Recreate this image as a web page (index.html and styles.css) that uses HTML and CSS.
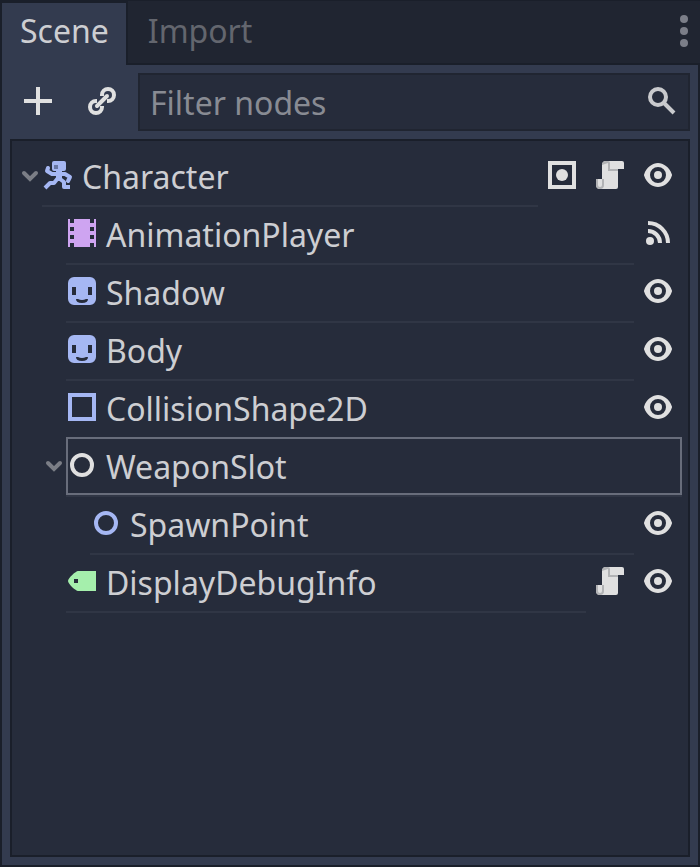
FILE: index.html
```html
<!DOCTYPE html>
<html lang="en">
<head>
<meta charset="utf-8">
<title>Scene</title>
<link rel="stylesheet" href="styles.css">
</head>
<body>
<svg class="defs" aria-hidden="true">
  <symbol id="eye" viewBox="0 0 16 16"><path fill="#e0e0e0" fill-rule="evenodd" d="M8 2C5.443 2 2.209 3.948 1.045 7.705a1 1 0 0 0-.01.559C2.163 12.211 5.500 14 8 14s5.836-1.789 6.965-5.736a1 1 0 0 0 0-.553C13.767 3.941 10.557 2 8 2zm0 2a4 4 0 0 1 0 8 4 4 0 0 1 0-8zm0 2a2 2 0 0 0 0 4 2 2 0 0 0 0-4z"/></symbol>
  <symbol id="script" viewBox="0 0 16 16"><path fill="#e0e0e0" d="M6 1h8a1 1 0 0 1 1 1v3h-3v9a1 1 0 0 1-1 1H3a2 2 0 0 1-2-2v-3h3V3a2 2 0 0 1 2-2z"/><path fill="#b2b3b5" d="M6 1a2 2 0 0 0-2 2l3-1v4h5V5H8V2a1 1 0 0 0-1-1zM4 10h1v3a2 2 0 0 1-2 2 2 2 0 0 1-2-2v-3h1v3a1 1 0 0 0 2 0z"/></symbol>
  <symbol id="sprite" viewBox="0 0 16 16"><path fill="#a5b7f3" fill-rule="evenodd" d="M4 1a3 3 0 0 0-3 3v8a3 3 0 0 0 3 3h8a3 3 0 0 0 3-3V4a3 3 0 0 0-3-3zM3 6h2v4H3zm8 0h2v4h-2zM5 12h1q2 1 4 0h1q0 2-3 2t-3-2z"/></symbol>
  <symbol id="arrow" viewBox="0 0 12 16"><path fill="none" stroke="#7b7e86" stroke-width="2" stroke-linecap="round" d="m3 7 3 3 3-3"/></symbol>
</svg>
<main class="dock">
  <header class="tabs" role="tablist">
    <button class="tab active" role="tab" aria-selected="true">Scene</button>
    <button class="tab" role="tab" aria-selected="false">Import</button>
    <button class="more" aria-label="Dock options"><svg viewBox="0 0 8 32" width="8" height="32"><g fill="#7b7e88"><circle cx="4" cy="4" r="4"/><circle cx="4" cy="16" r="4"/><circle cx="4" cy="28" r="4"/></g></svg></button>
  </header>
  <section class="panel">
    <div class="toolbar">
      <button class="tool" aria-label="Add node"><svg class="icon" viewBox="0 0 16 16"><path fill="#e0e0e0" d="M7 1v6H1v2h6v6h2V9h6V7H9V1z"/></svg></button>
      <button class="tool" aria-label="Instance scene"><svg class="icon" viewBox="0 0 16 16"><g fill="none" stroke="#e0e0e0" stroke-width="2"><path d="M8 5.500V5a3 3 0 1 1 3 3h-.5M8 10.500v.5a3 3 0 1 1-3-3h.5"/><path stroke-linecap="round" d="m5.500 10.500 5-5"/></g></svg></button>
      <label class="search"><input type="text" placeholder="Filter nodes" aria-label="Filter nodes"><svg class="icon" viewBox="0 0 16 16"><g fill="none" stroke="#c9cacd" stroke-width="2"><circle cx="6" cy="6" r="4"/><path d="m9 9 5 5"/></g></svg></label>
    </div>
    <ul class="tree" role="tree">
      <li class="row" role="treeitem">
        <button class="fold" aria-label="Collapse"><svg><use href="#arrow"/></svg></button>
        <div class="item"><svg class="icon" viewBox="0 0 16 16"><path fill="#a5b7f3" d="M6 1h5a1 1 0 0 1 1 1v3a1 1 0 0 1-1 1h-1v5H7V6H6a1 1 0 0 1-1-1V2a1 1 0 0 1 1-1z"/><path fill="#6776a3" d="M6 3h2v2H6z"/><path fill="none" stroke="#a5b7f3" stroke-width="2" stroke-linecap="round" stroke-linejoin="round" d="M3 4.500 2.500 6 5 7.500h6.500L14 9l-1 2"/><path fill="none" stroke="#a5b7f3" stroke-width="2" stroke-linejoin="round" d="M8 9.500 6 12H4l-2.500 2.500M9 10l2 1.500V14h3"/></svg><span>Character</span></div>
        <button class="act" aria-label="Groups"><svg class="icon" viewBox="0 0 16 16"><rect x="2" y="2" width="12" height="12" fill="none" stroke="#e0e0e0" stroke-width="2"/><circle cx="8" cy="8" r="3" fill="#e0e0e0"/></svg></button>
        <button class="act" aria-label="Open script"><svg class="icon"><use href="#script"/></svg></button>
        <button class="act" aria-label="Toggle visibility"><svg class="icon"><use href="#eye"/></svg></button>
      </li>
      <li class="row child" role="treeitem">
        <div class="item"><svg class="icon" viewBox="0 0 16 16"><path fill="#cea4f1" fill-rule="evenodd" d="M1 1h14v14H1zM2 1v2h2V1zM2 5v2h2V5zM2 9v2h2V9zM2 13v2h2v-2zM12 1v2h2V1zM12 5v2h2V5zM12 9v2h2V9zM12 13v2h2v-2z"/></svg><span>AnimationPlayer</span></div>
        <button class="act" aria-label="Signals"><svg class="icon" viewBox="0 0 16 16"><circle cx="4" cy="12" r="2" fill="#e0e0e0"/><path fill="none" stroke="#e0e0e0" stroke-width="2" d="M3 3a10 10 0 0 1 10 10M3 7a6 6 0 0 1 6 6"/></svg></button>
      </li>
      <li class="row child" role="treeitem">
        <div class="item"><svg class="icon"><use href="#sprite"/></svg><span>Shadow</span></div>
        <button class="act" aria-label="Toggle visibility"><svg class="icon"><use href="#eye"/></svg></button>
      </li>
      <li class="row child" role="treeitem">
        <div class="item"><svg class="icon"><use href="#sprite"/></svg><span>Body</span></div>
        <button class="act" aria-label="Toggle visibility"><svg class="icon"><use href="#eye"/></svg></button>
      </li>
      <li class="row child" role="treeitem">
        <div class="item"><svg class="icon" viewBox="0 0 16 16"><rect x="2" y="2" width="12" height="12" fill="none" stroke="#a5b7f3" stroke-width="2"/></svg><span>CollisionShape2D</span></div>
        <button class="act" aria-label="Toggle visibility"><svg class="icon"><use href="#eye"/></svg></button>
      </li>
      <li class="row nested" role="treeitem" aria-selected="true">
        <button class="fold" aria-label="Collapse"><svg><use href="#arrow"/></svg></button>
        <div class="item selected"><svg class="icon" viewBox="0 0 16 16"><circle cx="8" cy="8" r="5" fill="none" stroke="#e0e0e0" stroke-width="2"/></svg><span>WeaponSlot</span></div>
      </li>
      <li class="row grandchild" role="treeitem">
        <div class="item"><svg class="icon" viewBox="0 0 16 16"><circle cx="8" cy="8" r="5" fill="none" stroke="#a5b7f3" stroke-width="2"/></svg><span>SpawnPoint</span></div>
        <button class="act" aria-label="Toggle visibility"><svg class="icon"><use href="#eye"/></svg></button>
      </li>
      <li class="row child" role="treeitem">
        <div class="item"><svg class="icon" viewBox="0 0 16 16"><path fill="#a5efac" fill-rule="evenodd" d="M6 3C5 3 1 6.500 1 8s4 5 5 5h9V3zM4 7h2v2H4z"/></svg><span>DisplayDebugInfo</span></div>
        <button class="act" aria-label="Open script"><svg class="icon"><use href="#script"/></svg></button>
        <button class="act" aria-label="Toggle visibility"><svg class="icon"><use href="#eye"/></svg></button>
      </li>
    </ul>
  </section>
</main>
</body>
</html>
```
FILE: styles.css
```css
* {
  box-sizing: border-box;
}

body {
  margin: 0;
  background: #202531;
  color: #cdced2;
  font: 32px/44px "Noto Sans", sans-serif;
}

button {
  margin: 0;
  padding: 0;
  border: 0;
  background: none;
  color: inherit;
  font: inherit;
}

svg {
  display: block;
}

.defs {
  display: none;
}

.icon {
  width: 32px;
  height: 32px;
  flex: none;
}

.dock {
  display: flex;
  flex-direction: column;
  min-height: 100vh;
}

.tabs {
  display: flex;
  height: 65px;
  border-top: 1px solid #1a1f2a;
  box-shadow: inset 0 -2px #1a1f2a;
}

.tab {
  padding: 0 20px 4px;
  color: #63666e;
}

.tab.active {
  padding: 0 17px 6px 18px;
  border: 2px solid #1a1f2a;
  border-bottom: 0;
  background: #333b4f;
  color: #cdced2;
}

.more {
  margin-left: auto;
  padding: 0 12px 4px 8px;
}

.panel {
  display: flex;
  flex: 1;
  flex-direction: column;
  gap: 8px;
  padding: 8px;
  border: 2px solid #1a1f2a;
  border-top: 0;
  background: #333b4f;
}

.toolbar {
  display: flex;
  align-items: center;
}

.tool {
  width: 56px;
  padding: 0 12px 2px;
}

.tool + .tool {
  width: 72px;
  padding-left: 20px;
}

.search {
  display: flex;
  flex: 1;
  min-width: 0;
  height: 58px;
  padding: 0 10px;
  border: 2px solid #202531;
  background: #262c3b;
}

.search input {
  flex: 1;
  min-width: 0;
  padding: 2px 0 0;
  border: 0;
  outline: 0;
  background: none;
  color: inherit;
  font: inherit;
}

.search input::placeholder {
  color: #888b93;
  opacity: 1;
}

.search .icon {
  margin-top: 10px;
}

.tree {
  flex: 1;
  margin: 0;
  padding: 8px 6px;
  border: 2px solid #1a1f2a;
  background: #262c3b;
  list-style: none;
}

.row {
  display: flex;
  height: 58px;
}

.child {
  padding-left: 48px;
}

.nested {
  padding-left: 24px;
}

.grandchild {
  padding-left: 72px;
}

.fold {
  width: 24px;
  padding-bottom: 6px;
}

.fold svg {
  width: 24px;
  height: 32px;
}

.item {
  position: relative;
  display: flex;
  flex: 1;
  min-width: 0;
  gap: 8px;
  padding-top: 10px;
  border-bottom: 2px solid #303645;
}

.item span {
  margin-top: -4px;
}

.selected::before {
  content: "";
  position: absolute;
  inset: -2px 0 0;
  border: 2px solid #686d7b;
}

.act {
  width: 48px;
  padding: 0 8px 6px;
}
```
